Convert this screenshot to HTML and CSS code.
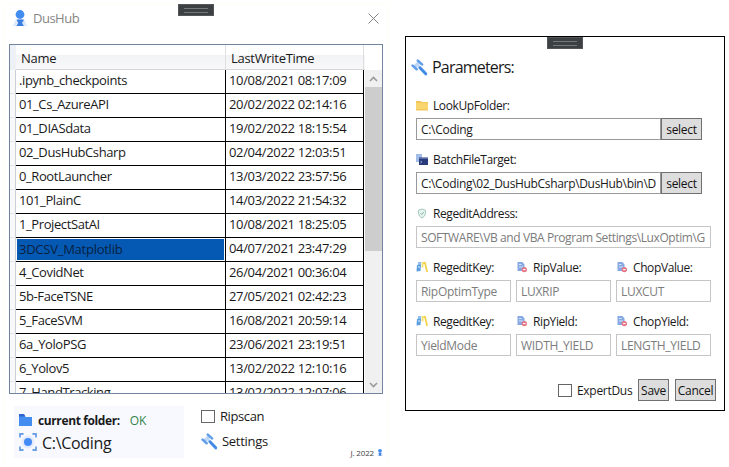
FILE: index.html
```
<!DOCTYPE html>
<html lang="en">
<head>
<meta charset="utf-8">
<title>DusHub</title>
<link rel="stylesheet" href="styles.css">
</head>
<body>
<svg width="0" height="0" class="defs">
  <symbol id="hammer" viewBox="0 0 17 17">
    <path d="M3.500 8 9 2.500" stroke="#bcd7f8" stroke-width="3.600" fill="none"/>
    <path d="M6.800 1.600 11 5.400M1.600 6.600 5.600 10.200" stroke="#629ee8" stroke-width="2.600" stroke-linecap="round" fill="none"/>
    <path d="M7 6.500 9 8.500" stroke="#bcd7f8" stroke-width="2.500"/>
    <path d="M9 8.800 14.700 14.800" stroke="#438ce6" stroke-width="3" stroke-linecap="round" fill="none"/>
  </symbol>
  <symbol id="person" viewBox="0 0 14 17">
    <path d="M3 9 0 16H14L11 9Z" fill="#dce8fb"/>
    <circle cx="7" cy="4.500" r="4.400" fill="#438cf0"/>
    <path d="M4 9.500H10.500V11.500H9.300V13.500L10.800 16H3.500L5 13.500V11.500H4Z" fill="#3b7de0"/>
  </symbol>
  <symbol id="keys" viewBox="0 0 12 11">
    <path d="M2 0H5V3H2Z" fill="#8fc0f0"/><path d="M1 3 5 2.500 4.500 9 .5 9.500Z" fill="#5b9ee0"/>
    <path d="M2 5H4" stroke="#e5f3ff"/>
    <path d="M7 1 9 1 11.200 10" stroke="#f3d34d" stroke-width="1.800" fill="none"/><path d="M6.500 0V5.500" stroke="#f7e279" stroke-width="2"/>
  </symbol>
  <symbol id="docx" viewBox="0 0 11 11">
    <path d="M1 0H6L8 2.500V9H1Z" fill="#86a9e4"/><path d="M2.500 2.500H5M2.500 5H6.500" stroke="#d7e4fa"/>
    <circle cx="7.800" cy="7.600" r="2.700" fill="#e67586"/><path d="M6.500 7.600H9.100" stroke="#fff"/>
  </symbol>
</svg>
<div class="desktop">
  <main class="hub">
    <div class="grip hub-grip"></div>
    <header class="titlebar">
      <svg class="logo"><use href="#person"/></svg>
      <span class="app-name">DusHub</span>
      <svg class="close" viewBox="0 0 11 11"><path d="M.5.5 10.500 10.500M10.500.5.5 10.500" stroke="#777" stroke-width=".9"/></svg>
    </header>
    <section class="files">
      <div class="row head"><i></i><b>Name</b><b>LastWriteTime</b></div>
      <div class="body">
        <div class="rows">
          <div class="row"><i></i><span>.ipynb_checkpoints</span><span class="date">10/08/2021 08:17:09</span></div>
          <div class="row"><i></i><span>01_Cs_AzureAPI</span><span class="date">20/02/2022 02:14:16</span></div>
          <div class="row"><i></i><span>01_DIASdata</span><span class="date">19/02/2022 18:15:54</span></div>
          <div class="row"><i></i><span>02_DusHubCsharp</span><span class="date">02/04/2022 12:03:51</span></div>
          <div class="row"><i></i><span>0_RootLauncher</span><span class="date">13/03/2022 23:57:56</span></div>
          <div class="row"><i></i><span>101_PlainC</span><span class="date">14/03/2022 21:54:32</span></div>
          <div class="row"><i></i><span>1_ProjectSatAI</span><span class="date">10/08/2021 18:25:05</span></div>
          <div class="row"><i></i><span class="selected">3DCSV_Matplotlib</span><span class="date">04/07/2021 23:47:29</span></div>
          <div class="row"><i></i><span>4_CovidNet</span><span class="date">26/04/2021 00:36:04</span></div>
          <div class="row"><i></i><span>5b-FaceTSNE</span><span class="date">27/05/2021 02:42:23</span></div>
          <div class="row"><i></i><span>5_FaceSVM</span><span class="date">16/08/2021 20:59:14</span></div>
          <div class="row"><i></i><span>6a_YoloPSG</span><span class="date">23/06/2021 23:19:51</span></div>
          <div class="row"><i></i><span>6_Yolov5</span><span class="date">13/02/2022 12:10:16</span></div>
          <div class="row"><i></i><span>7_HandTracking</span><span class="date">13/02/2022 12:07:06</span></div>
        </div>
        <div class="scroll">
          <svg viewBox="0 0 17 17"><path d="M5 11 8.500 7.500 12 11" stroke="#999" stroke-width="1.600" fill="none"/></svg>
          <div class="thumb"></div>
          <svg viewBox="0 0 17 17"><path d="M5 7 8.500 10.500 12 7" stroke="#999" stroke-width="1.600" fill="none"/></svg>
        </div>
      </div>
    </section>
    <footer class="foot">
      <div class="current">
        <div class="line">
          <svg class="folder" viewBox="0 0 13 12"><path d="M0 1H5L6.500 3H13V12H0Z" fill="#438cf0"/><path d="M0 0H5L6.500 2.500H0Z" fill="#2e65cf"/></svg>
          <strong>current folder:</strong><span class="ok">OK</span>
        </div>
        <div class="line path">
          <svg class="focus" viewBox="0 0 18 18"><circle cx="9" cy="9" r="6.500" fill="#e3ebfc"/><circle cx="9" cy="9" r="4" fill="#438cf8"/><path d="M1 4.500V1H4.500M13.500 1H17V4.500M17 13.500V17H13.500M4.500 17H1V13.500" stroke="#6ba0e3" stroke-width="1.800" fill="none"/></svg>
          <span>C:\Coding</span>
        </div>
      </div>
      <div class="options">
        <div class="ripscan"><span class="box"></span><span>Ripscan</span></div>
        <div class="settings"><svg class="tool"><use href="#hammer"/></svg><span>Settings</span></div>
      </div>
      <div class="credit"><span>J. 2022</span><svg><use href="#person"/></svg></div>
    </footer>
  </main>

  <aside class="params">
    <div class="grip params-grip"></div>
    <h1><svg class="tool"><use href="#hammer"/></svg><span>Parameters:</span></h1>
    <div class="field">
      <label><svg viewBox="0 0 12 11"><path d="M0 1H5L6 2H12V10.500H0Z" fill="#f2c75b"/><path d="M0 3H12V9H0Z" fill="#f9d570"/></svg><span>LookUpFolder:</span></label>
      <div class="pick"><div class="input">C:\Coding</div><button>select</button></div>
    </div>
    <div class="field">
      <label><svg viewBox="0 0 12 11"><path d="M0 0H6V8H0Z" fill="#a3bde9"/><path d="M3 3.500H12V11H3Z" fill="#293b7b"/><path d="M3 4.500H12" stroke="#596caa"/><path d="M4.500 7 6 8 4.500 9" stroke="#b5c4e9" fill="none" stroke-width=".7"/></svg><span>BatchFileTarget:</span></label>
      <div class="pick"><div class="input target">C:\Coding\02_DusHubCsharp\DusHub\bin\D</div><button>select</button></div>
    </div>
    <div class="field">
      <label><svg viewBox="0 0 12 11"><path d="M6 1 9.500 2.200V5.500Q9 8.500 6 10 3 8.500 2.500 5.500V2.200Z" fill="#e8f5ef" stroke="#a2c8bf"/><path d="M4.500 5 5.700 6.500 8 4" stroke="#86b5ab" fill="none"/></svg><span>RegeditAddress:</span></label>
      <div class="input muted address">SOFTWARE\VB and VBA Program Settings\LuxOptim\G</div>
    </div>
    <div class="triple">
      <div class="field"><label><svg><use href="#keys"/></svg><span>RegeditKey:</span></label><div class="input muted">RipOptimType</div></div>
      <div class="field"><label><svg><use href="#docx"/></svg><span>RipValue:</span></label><div class="input muted">LUXRIP</div></div>
      <div class="field"><label><svg><use href="#docx"/></svg><span>ChopValue:</span></label><div class="input muted">LUXCUT</div></div>
      <div class="field"><label><svg><use href="#keys"/></svg><span>RegeditKey:</span></label><div class="input muted">YieldMode</div></div>
      <div class="field"><label><svg><use href="#docx"/></svg><span>RipYield:</span></label><div class="input muted">WIDTH_YIELD</div></div>
      <div class="field"><label><svg><use href="#docx"/></svg><span>ChopYield:</span></label><div class="input muted">LENGTH_YIELD</div></div>
    </div>
    <div class="actions"><span class="box"></span><span class="expert">ExpertDus</span><button class="save">Save</button><button class="cancel">Cancel</button></div>
  </aside>
</div>
</body>
</html>
```
FILE: styles.css
```
* { box-sizing: border-box; }
body { margin: 0; width: 729px; height: 467px; overflow: hidden; background: #fff; color: #1a1a1a; font: 13px "Open Sans", "Noto Sans", sans-serif; letter-spacing: -.3px; white-space: nowrap; }
svg { display: block; flex: none; }
.defs { position: absolute; }
.desktop { display: flex; align-items: flex-start; }
.hub { position: relative; width: 384px; height: 459px; margin: 4px 0 0 4px; padding: 0 5px; border: 1px solid #fefdf6; border-width: 1px 1px 0; }
.grip { position: absolute; top: 0; width: 36px; height: 12px; background: #3d4043; border: 1px solid #53575a; }
.grip::after { content: ""; display: block; height: 3px; margin: 3px 5px 0; border: 1px solid #71797b; border-width: 1px 0; }
.hub-grip { left: 173px; top: -1px; }
.params-grip { left: 141px; top: 0; }
.titlebar { display: flex; align-items: center; height: 27px; margin-left: -1px; padding: 0 3px; color: #858585; }
.logo { width: 14px; height: 17px; margin-left: 1px; }
.app-name { margin: -1px 0 0 6px; letter-spacing: -.7px; letter-spacing: -.5px; }
.close { width: 11px; height: 11px; margin-left: auto; }
.files { width: 374px; height: 350px; margin: 12px 0 0 -1px; border: 1px solid #71869d; overflow: hidden; }
.row { display: grid; grid-template-columns: 6px 210px 138px; width: 355px; height: 24px; }
.row i { background: #f8f9fb; border-right: 1px solid #cbced4; border-bottom: 1px solid #e1e3e7; }
.row span { padding-left: 3px; line-height: 21px; letter-spacing: -.4px; border-right: 1px solid #000; border-bottom: 1px solid #000; }
.row .date { letter-spacing: -.34px; }
.row .selected { color: #08213f; background: #0559b3 content-box; padding: 1px; line-height: 20px; text-indent: 2px; letter-spacing: -.25px; }
.head { height: 25px; background: linear-gradient(#fff 40%, #f2f3f5 42%, #f8f8f9); border-bottom: 1px solid #d5d6d8; }
.head i { border: 0; background: #edf0f4; }
.head b { font-weight: 400; padding-left: 5px; line-height: 26px; border-right: 1px solid #dfdfe2; }
.body { display: flex; height: 323px; align-items: flex-start; }
.rows { width: 355px; height: 323px; overflow: hidden; }
.scroll { display: flex; flex-direction: column; width: 17px; height: 323px; background: #f0f0f0; }
.scroll svg { width: 17px; height: 17px; }
.thumb { height: 164px; margin-bottom: auto; background: #cdcdcd; }
.foot { position: relative; display: flex; padding: 12px 0 0 4px; }
.current { width: 170px; height: 52px; padding: 4px 0 0 5px; background: #f7f9ff; }
.line { display: flex; align-items: center; height: 20px; }
.folder { width: 13px; height: 12px; }
strong { font-size: 12px; letter-spacing: -.38px; margin-left: 6px; }
.ok { color: #338449; font-size: 12px; margin-left: 10px; }
.path { height: 26px; font-size: 16px; letter-spacing: -.3px; }
.focus { width: 18px; height: 18px; margin-top: -2px; }
.path span { margin-left: 5px; }
.options { margin-left: 17px; }
.ripscan, .settings { display: flex; align-items: center; height: 20px; }
.box { width: 14px; height: 13px; border: 1px solid #666; background: #fff; }
.ripscan .box + span { margin-left: 5px; letter-spacing: -.4px; }
.settings { margin-top: 5px; }
.tool { width: 17px; height: 17px; }
.settings span { margin-left: 4px; }
.credit { position: absolute; right: -1px; bottom: 0; display: flex; align-items: center; color: #444; font-size: 8px; letter-spacing: -.15px; }
.credit svg { width: 6px; height: 9px; margin-left: 3px; }
.params { position: relative; width: 320px; height: 375px; margin: 36px 0 0 17px; padding: 20px 10px 0; border: 1px solid #000; font-size: 12px; letter-spacing: -.3px; }
h1 { display: flex; align-items: center; height: 20px; margin: 0 0 17px -5px; font-size: 16px; font-weight: 400; letter-spacing: -.8px; }
h1 span { margin-left: 4px; }
.field { height: 54px; }
label { display: flex; align-items: center; height: 24px; padding-bottom: 1px; letter-spacing: -.4px; }
label svg { width: 12px; height: 11px; }
label span { margin-left: 5px; }
.pick { display: flex; width: 286px; }
.input { width: 245px; height: 22px; padding-left: 4px; line-height: 21px; border: 1px solid #999; overflow: hidden; }
.target { letter-spacing: -.33px; }
.muted { width: 95px; color: #7c7c7c; border-color: #c5c5c5; }
.address { width: 295px; letter-spacing: -.4px; }
button { height: 22px; padding: 0; font: inherit; letter-spacing: inherit; border: 1px solid #707070; background: #ddd; color: #111; }
.pick button { width: 41px; }
.triple { display: grid; grid-template-columns: 95px 95px 95px; column-gap: 5px; }
.actions { display: flex; align-items: center; margin: 15px -6px 0 142px; }
.expert { margin-left: 5px; width: 61px; }
.save { width: 31px; }
.cancel { width: 41px; margin-left: 6px; }
```
